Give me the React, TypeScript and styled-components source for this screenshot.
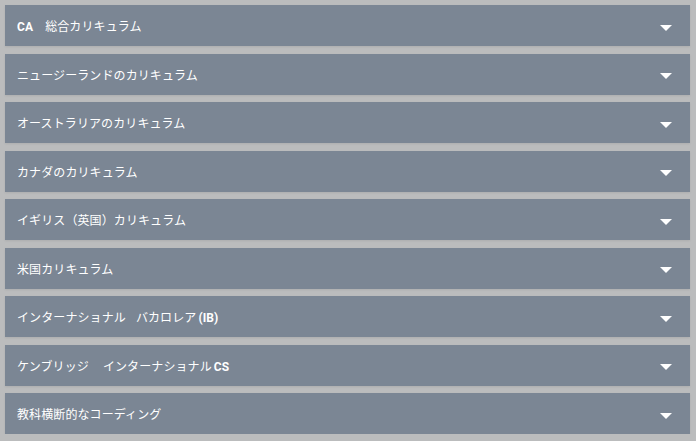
import React from "react";
import styled, { createGlobalStyle } from "styled-components";

const Global = createGlobalStyle`
  html, body {
    margin: 0;
    padding: 0;
    background: #bbbcbd;
  }
  body {
    font-family: "Noto Sans CJK JP", "Noto Sans", sans-serif;
  }
`;

const List = styled.div`
  display: flex;
  flex-direction: column;
  gap: 7.5px;
  padding: 5px 6px 0 5px;
`;

const Row = styled.div`
  height: 41px;
  background: #7b8694;
  display: flex;
  align-items: center;
  justify-content: space-between;
  padding: 0 18px 0 12px;
  box-shadow: 0 1px 2px rgba(0, 0, 0, 0.08);
  color: #fff;
  font-size: 12px;
  letter-spacing: 0.1px;
`;

const Title = styled.span`
  white-space: pre;
  b {
    font-family: "Roboto", "Liberation Sans", sans-serif;
    font-weight: 700;
  }
`;

const Gap = styled.span<{ $w: number }>`
  display: inline-block;
  width: ${(p) => p.$w}px;
`;

const Arrow = styled.span`
  width: 0;
  height: 0;
  border-left: 6px solid transparent;
  border-right: 6px solid transparent;
  border-top: 6px solid #fff;
  margin-top: 4px;
`;

const items: React.ReactNode[] = [
  <><b>CA</b><Gap $w={12} />総合カリキュラム</>,
  "ニュージーランドのカリキュラム",
  "オーストラリアのカリキュラム",
  "カナダのカリキュラム",
  "イギリス（英国）カリキュラム",
  "米国カリキュラム",
  <>インターナショナル<Gap $w={10} />バカロレア<Gap $w={2} /><b>(IB)</b></>,
  <>ケンブリッジ<Gap $w={14} />インターナショナル<Gap $w={2} /><b>CS</b></>,
  "教科横断的なコーディング",
];

export default function App() {
  return (
    <>
      <Global />
      <List>
        {items.map((t, i) => (
          <Row key={i}>
            <Title>{t}</Title>
            <Arrow />
          </Row>
        ))}
      </List>
    </>
  );
}
